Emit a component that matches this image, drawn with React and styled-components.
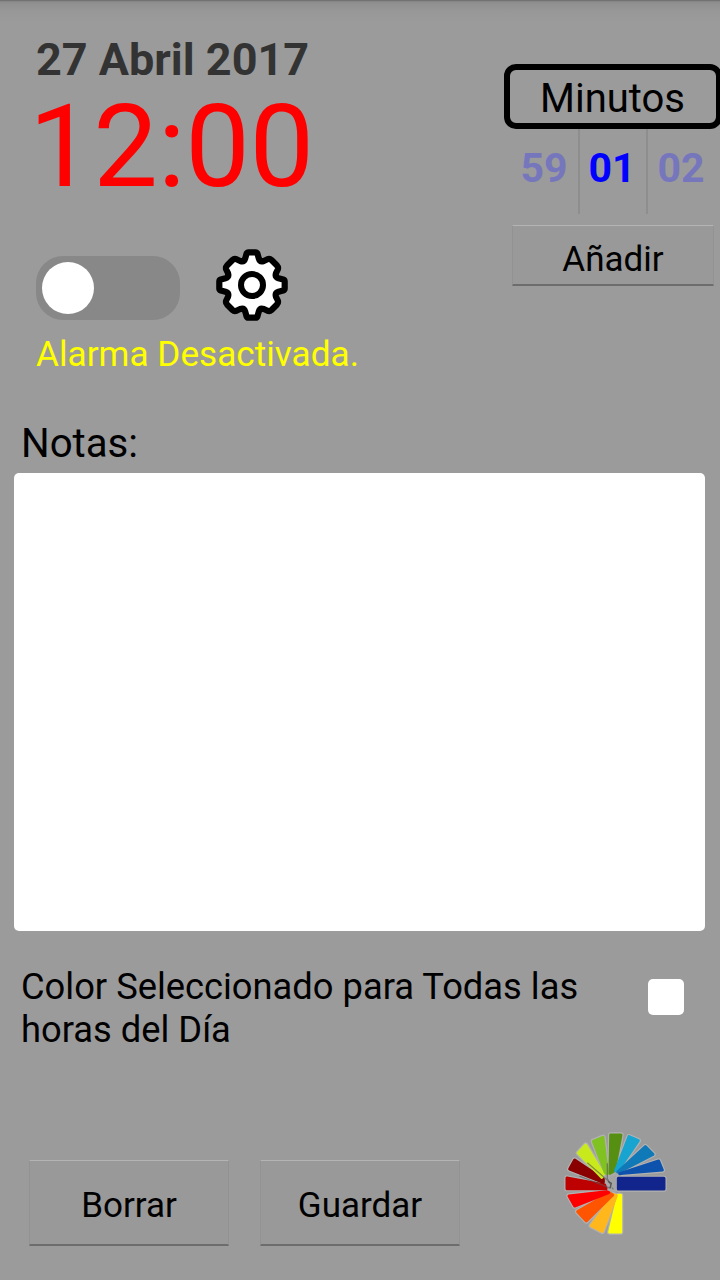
import React from "react";
import styled, { createGlobalStyle } from "styled-components";

const GlobalStyle = createGlobalStyle`
  * { box-sizing: border-box; }
  body { margin: 0; background: #9b9b9b; }
`;

const Screen = styled.main`
  width: 720px;
  height: 1280px;
  overflow: hidden;
  display: flex;
  flex-direction: column;
  font-family: Roboto, "Liberation Sans", sans-serif;
  color: #000;
  background:
    linear-gradient(#666 0, #7f7f7f 1px, #8d8d8d 2px, #929292 5px, #989898 12px, rgba(155, 155, 155, 0) 22px) top / 100% 22px no-repeat,
    #9b9b9b;
`;

const Header = styled.header`
  display: flex;
  justify-content: space-between;
  height: 420px;
`;

const Summary = styled.section`
  padding: 33px 0 0 36px;
  display: flex;
  flex-direction: column;
`;

const DateText = styled.div`
  font-size: 45px;
  line-height: 53px;
  font-weight: 700;
  color: #333;
  white-space: nowrap;
`;

const TimeText = styled.div`
  margin: 11px 0 0 -7px;
  font-size: 115px;
  line-height: 100px;
  letter-spacing: -0.3px;
  color: #f00;
`;

const AlarmRow = styled.div`
  display: flex;
  margin-top: 52px;
  height: 72px;
  gap: 36px;
`;

const Switch = styled.button`
  width: 144px;
  height: 64px;
  margin-top: 7px;
  padding: 6px;
  border: 0;
  border-radius: 27px;
  background: #888;
  display: flex;
  align-items: center;
`;

const Knob = styled.span`
  width: 52px;
  height: 52px;
  border-radius: 50%;
  background: #fff;
`;

const Status = styled.div`
  margin-top: 12px;
  font-size: 35.2px;
  line-height: 42px;
  color: #ff0;
  white-space: nowrap;
`;

const MinutesPanel = styled.section`
  width: 216px;
  flex: none;
  padding-top: 64px;
`;

const MinutesTitle = styled.div`
  width: 218px;
  height: 65px;
  border: 6px solid #000;
  border-radius: 12px;
  padding-right: 1px;
  font-size: 40px;
  line-height: 58px;
  text-align: center;
`;

const Picker = styled.div`
  display: flex;
  height: 85px;
  margin: 0 4px 11px 8px;
`;

const Minute = styled.div`
  width: 68px;
  padding: 14px 2px 0 0;
  font-size: 41px;
  line-height: 50px;
  font-weight: 700;
  text-align: center;
  color: ${(p) => (p.$active ? "#00f" : "#7676bd")};
  border-right: ${(p) => (p.$last ? "0" : "2px solid #8e8e8e")};
`;

const Button = styled.button`
  display: block;
  width: ${(p) => p.$width}px;
  height: ${(p) => p.$height}px;
  margin: 0 0 0 ${(p) => p.$indent || 0}px;
  padding: ${(p) => p.$drop || 0}px 0 0;
  border: 1px solid #929292;
  border-top: 1px solid #b4b4b4;
  border-bottom: 2px solid #6d6d6d;
  border-radius: 1px;
  background: #999;
  font: 35px/42px Roboto, "Liberation Sans", sans-serif;
  color: #000;
`;

const NotesLabel = styled.label`
  padding-left: 21px;
  font-size: 40.2px;
  line-height: 48px;
`;

const NotesField = styled.textarea`
  display: block;
  width: 691px;
  height: 458px;
  margin: 5px 0 0 14px;
  border: 0;
  border-radius: 5px;
  background: #fff;
  resize: none;
  outline: 0;
`;

const ColorRow = styled.section`
  display: flex;
  justify-content: space-between;
  padding: 0 36px 0 21px;
  margin-top: 34px;
`;

const ColorLabel = styled.div`
  width: 580px;
  font-size: 36.3px;
  line-height: 43px;
`;

const CheckBox = styled.button`
  width: 36px;
  height: 36px;
  margin-top: 14px;
  padding: 0;
  border: 0;
  border-radius: 5px;
  background: #fff;
`;

const Footer = styled.footer`
  display: flex;
  align-items: flex-start;
  margin-top: 69px;
  padding-left: 29px;
`;

const FooterButtons = styled.div`
  display: flex;
  gap: 31px;
  padding-top: 40px;
`;

const FanIcon = styled.svg`
  margin-left: 90px;
`;

// One quarter of the gear outline, from the top tooth to the right tooth.
const quarter = [
  ["L", 3.5, -32.7],
  ["Q", 5, -32.7, 5.5, -31.2],
  ["L", 6.8, -26.5],
  ["Q", 8, -22.8, 11.8, -24],
  ["L", 15.5, -25.8],
  ["Q", 17.8, -26.6, 19.5, -25],
  ["L", 25, -19.5],
  ["Q", 26.6, -17.8, 25.8, -15.5],
  ["L", 24, -11.8],
  ["Q", 22.8, -8, 26.5, -6.8],
  ["L", 31.2, -5.5],
  ["Q", 32.7, -5, 32.7, -3.5],
];

const turn = (steps) =>
  steps.map(([cmd, ...n]) => {
    const out = [cmd];
    for (let i = 0; i < n.length; i += 2) out.push(-n[i + 1], n[i]);
    return out;
  });

const q2 = turn(quarter);
const q3 = turn(q2);
const q4 = turn(q3);
const gearPath = "M0 -32.7 " + [...quarter, ...q2, ...q3, ...q4].map((s) => s.join(" ")).join(" ") + " Z";

const Gear = () => (
  <svg width="72" height="72" viewBox="-36 -36 72 72" fill="#fff" stroke="#000" strokeWidth="6.2" strokeLinejoin="round">
    <path d={gearPath} />
    <circle r="11" strokeWidth="6" />
  </svg>
);

const blades = [
  ["#ffff00", "179,336 212,336 212,226 205,226"],
  ["#ffb71c", "124,317 157,334 199,227 191,224"],
  ["#ff5500", "83,275 109,303 188,225 179,219"],
  ["#ff0000", "57,228 74,258 176,218 170,215"],
  ["#bd0000", "51,174 51,206 168,206 164,195"],
  ["#8a0000", "74,120 59,147 160,187 160,178"],
  ["#c8ea1c", "85,99 107,75 160,162 155,172"],
  ["#80c222", "130,64 159,52 172,161 166,158"],
  ["#568f12", "182,45 213,45 193,152 180,160"],
  ["#17a4d0", "237,50 265,62 206,148 197,152"],
  ["#1079b8", "286,80 309,103 213,153 203,156"],
  ["#0d52ac", "326,123 337,150 220,160 209,161"],
  ["#11258c", "205,175 342,175 342,207 205,207"],
];

const Fan = () => (
  <FanIcon width="130" height="125" viewBox="0 0 390 375">
    <g stroke="#b2b2b2" strokeWidth="16" strokeLinejoin="round" fill="#b2b2b2">
      {blades.map(([c, pts]) => <polygon key={c} points={pts} />)}
    </g>
    <path d="M165 165L195 150 220 162 203 172V215H180L165 205Z" fill="#a9a9a9" />
    <g strokeWidth="9" strokeLinejoin="round">
      {blades.map(([c, pts]) => <polygon key={c} points={pts} fill={c} stroke={c} />)}
    </g>
    <path d="M112 128L176 184M88 168L182 205M172 130V176L190 208" stroke="#555" strokeOpacity=".6" strokeWidth="4" fill="none" />
    <path d="M178 172L198 166V210L184 200Z" fill="#a4a4a4" />
    <path d="M174 184L184 190 180 204" stroke="#555" strokeWidth="4" fill="none" />
  </FanIcon>
);

export default function App() {
  return (
    <>
      <GlobalStyle />
      <Screen>
        <Header>
          <Summary>
            <DateText>27 Abril 2017</DateText>
            <TimeText>12:00</TimeText>
            <AlarmRow>
              <Switch role="switch" aria-checked="false"><Knob /></Switch>
              <Gear />
            </AlarmRow>
            <Status>Alarma Desactivada.</Status>
          </Summary>
          <MinutesPanel>
            <MinutesTitle>Minutos</MinutesTitle>
            <Picker>
              <Minute>59</Minute>
              <Minute $active>01</Minute>
              <Minute $last>02</Minute>
            </Picker>
            <Button $width={202} $height={61} $indent={8} $drop={9}>Añadir</Button>
          </MinutesPanel>
        </Header>
        <NotesLabel htmlFor="notas">Notas:</NotesLabel>
        <NotesField id="notas" />
        <ColorRow>
          <ColorLabel>Color Seleccionado para Todas las horas del Día</ColorLabel>
          <CheckBox role="checkbox" aria-checked="false" />
        </ColorRow>
        <Footer>
          <FooterButtons>
            <Button $width={200} $height={86} $drop={6}>Borrar</Button>
            <Button $width={200} $height={86} $drop={6}>Guardar</Button>
          </FooterButtons>
          <Fan />
        </Footer>
      </Screen>
    </>
  );
}
